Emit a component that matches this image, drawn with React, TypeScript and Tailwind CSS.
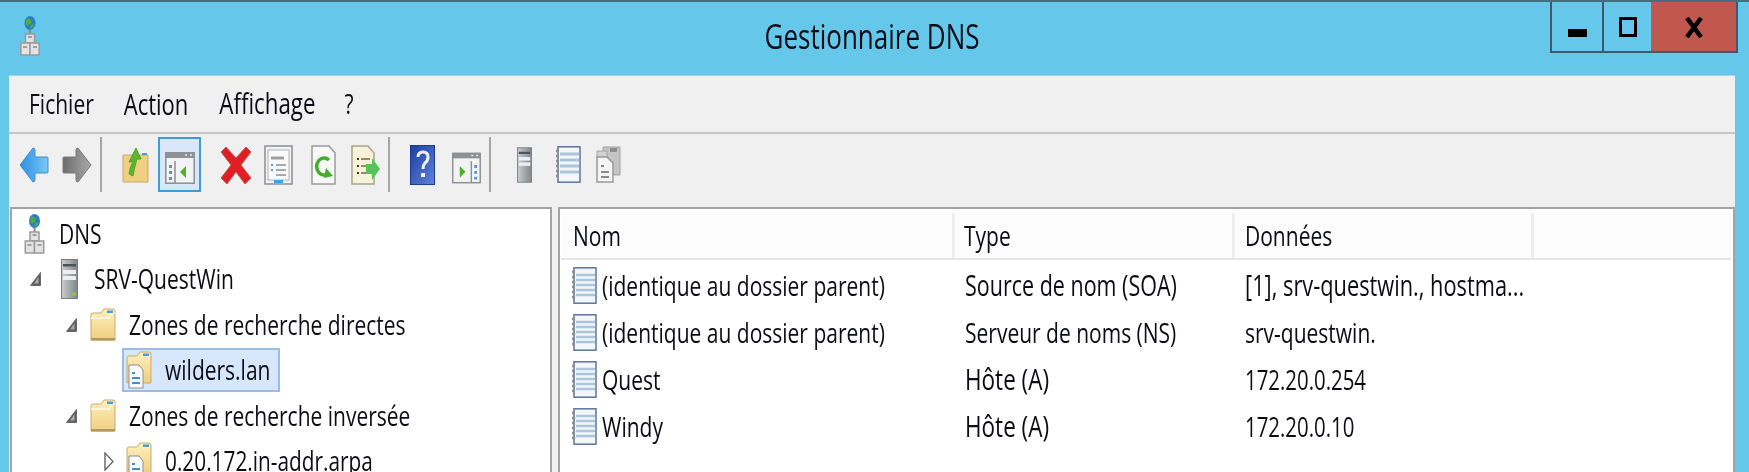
import React, { FC, ReactNode } from 'react';

type IconProps = { className?: string };

// Text in the screenshot is stretched vertically, so every label gets a scale-y
const Label: FC<{ children: ReactNode; className?: string }> = ({ children, className = '' }) => (
  <span className={`inline-block origin-center -translate-y-px scale-y-[1.32] whitespace-nowrap font-medium leading-[30px] text-[#0c0c16] [font-variant-ligatures:none] ${className}`}>
    {children}
  </span>
);

const Defs: FC = () => (
  <svg width="0" height="0" className="block">
    <defs>
      <linearGradient id="folderFill" x1="0" y1="0" x2="0" y2="1">
        <stop offset="0" stopColor="#fdf0bd" />
        <stop offset="1" stopColor="#f0cf80" />
      </linearGradient>
      <linearGradient id="metalFill" x1="0" y1="0" x2="1" y2="0">
        <stop offset="0" stopColor="#c9cdd0" />
        <stop offset="1" stopColor="#808688" />
      </linearGradient>
      <linearGradient id="backFill" x1="0" y1="0" x2="1" y2="0">
        <stop offset="0" stopColor="#2a8fe0" />
        <stop offset="1" stopColor="#7cc8f4" />
      </linearGradient>
      <linearGradient id="fwdFill" x1="0" y1="0" x2="1" y2="0">
        <stop offset="0" stopColor="#6d6d6d" />
        <stop offset="1" stopColor="#a8a8a8" />
      </linearGradient>
      <linearGradient id="helpFill" x1="0" y1="0" x2="1" y2="1">
        <stop offset="0" stopColor="#1d3fa0" />
        <stop offset="1" stopColor="#5f82dc" />
      </linearGradient>
    </defs>
  </svg>
);

const DnsIcon: FC<IconProps> = ({ className }) => (
  <svg viewBox="0 0 20 40" className={className}>
    <ellipse cx="10" cy="7" rx="5.5" ry="7" fill="#2b7fc4" />
    <path d="M6 4q3 -3 5 0q1 3 -2 5q-2 2 -3 -1zM11 9q3 -2 3 1q-2 3 -4 3z" fill="#4fae3c" />
    <rect x="9" y="14" width="2" height="4" fill="#8c8c8c" />
    <rect x="5.5" y="18" width="9" height="9" fill="#e3e3e3" stroke="#9a9a9a" strokeWidth="1.5" />
    <rect x="0.8" y="27" width="9.2" height="12" fill="#e3e3e3" stroke="#9a9a9a" strokeWidth="1.5" />
    <rect x="10" y="27" width="9.2" height="12" fill="#e3e3e3" stroke="#9a9a9a" strokeWidth="1.5" />
    <path d="M3 31h4M13 31h4M8 21h4" stroke="#8a8a8a" strokeWidth="1.5" />
  </svg>
);

const ServerIcon: FC<IconProps & { led?: string }> = ({ className, led = '#7ed23c' }) => (
  <svg viewBox="0 0 17 40" className={className}>
    <rect x="0.5" y="0.5" width="16" height="39" fill="url(#metalFill)" stroke="#7c7c7c" />
    <rect x="2" y="5" width="13" height="2.5" fill="#4c5257" />
    <rect x="2" y="11" width="13" height="4" fill="#eceeef" />
    <rect x="2" y="17" width="13" height="4" fill="#eceeef" />
    <circle cx="13" cy="35" r="2" fill={led} />
  </svg>
);

const FolderIcon: FC<IconProps> = ({ className }) => (
  <svg viewBox="0 0 26 33" className={className}>
    <path d="M1 7q0 -2 2 -2h8l3 -4h9q2 0 2 2v29H1z" fill="url(#folderFill)" stroke="#c9ab6c" />
    <path d="M1 10h18l3 -5h3" fill="none" stroke="#fffbe8" strokeWidth="1.5" />
    <rect x="17" y="2.5" width="6" height="2.5" fill="#4a9ee0" />
    <rect x="1" y="30" width="24" height="2.5" fill="#b7985c" />
  </svg>
);

const ZoneIcon: FC<IconProps> = ({ className }) => (
  <svg viewBox="0 0 26 38" className={className}>
    <path d="M1 7q0 -2 2 -2h8l3 -4h9q2 0 2 2v29H1z" fill="url(#folderFill)" stroke="#c9ab6c" />
    <rect x="17" y="2.5" width="6" height="2.5" fill="#4a9ee0" />
    <path d="M3 14h10l4 5v18H3z" fill="#fbfbfb" stroke="#8f8f8f" />
    <path d="M6 22h3M6 27h8M6 32h8" stroke="#3f8fd0" strokeWidth="2" />
  </svg>
);

const RecordIcon: FC<IconProps> = ({ className }) => (
  <svg viewBox="0 0 26 37" className={className}>
    <rect x="3" y="0.8" width="22" height="35.4" fill="#f4f7fa" stroke="#5d73a0" strokeWidth="1.5" />
    <path d="M5 8h19M5 13h19M5 18h19M5 23h19M5 28h19" stroke="#a9c6dc" strokeWidth="2.5" />
    <path d="M4 5H1M4 10H1M4 15H1M4 20H1M4 25H1M4 30H1" stroke="#8a8c90" strokeWidth="2.5" />
  </svg>
);

const BackIcon: FC<IconProps> = ({ className }) => (
  <svg viewBox="0 0 30 36" className={className}>
    <path d="M1 18 14 1q2 0 2 2v7h12q1 0 1 1v14q0 1 -1 1H16v7q0 2 -2 2z" fill="url(#backFill)" stroke="#3c8fd2" strokeLinejoin="round" />
  </svg>
);

const ForwardIcon: FC<IconProps> = ({ className }) => (
  <svg viewBox="0 0 30 36" className={className}>
    <path d="M29 18 16 1q-2 0 -2 2v7H2q-1 0 -1 1v14q0 1 1 1h12v7q0 2 2 2z" fill="url(#fwdFill)" stroke="#7a7a7a" strokeLinejoin="round" />
  </svg>
);

const FolderUpIcon: FC<IconProps> = ({ className }) => (
  <svg viewBox="0 0 27 36" className={className}>
    <path d="M1 8h25v27H1z" fill="#f0cf80" stroke="#c9ab6c" />
    <path d="M20 6h5v2h-5z" fill="#4a9ee0" />
    <path d="M7 27q1 -8 4 -12H7l7 -14 5 11h-4q-2 6 -4 17z" fill="#5bb82e" stroke="#3f9a20" strokeWidth="0.8" />
  </svg>
);

const PaneIcon: FC<IconProps & { right?: boolean }> = ({ className, right }) => (
  <svg viewBox="0 0 30 32" className={className}>
    <rect x="0.8" y="0.8" width="28.4" height="30.4" fill="#f3f3f3" stroke="#8a8f94" strokeWidth="1.5" />
    <rect x="1" y="1" width="28" height="5" fill="#8d9297" />
    <path d="M20 3h2M25 3h2" stroke="#e8e8e8" strokeWidth="1.5" />
    {right ? (
      <>
        <path d="M20 9v22" stroke="#8a8f94" strokeWidth="1.5" />
        <path d="M8 14l6 6-6 6z" fill="#4fb02c" />
        <path d="M23 13h3v3h-3zM23 19h3v3h-3zM23 25h3v3h-3z" fill="#5b95cf" />
      </>
    ) : (
      <>
        <path d="M10 9v22" stroke="#8a8f94" strokeWidth="1.5" />
        <path d="M21 14l-6 6 6 6z" fill="#4fb02c" />
        <path d="M4 13h3v3H4zM4 19h3v3H4zM4 25h3v3H4z" fill="#5b95cf" />
      </>
    )}
  </svg>
);

const DeleteIcon: FC<IconProps> = ({ className }) => (
  <svg viewBox="0 0 30 40" className={className}>
    <path d="M5 2 15 13 25 2 30 7 20 20 30 33 24 39 15 27 6 39 0 33 10 20 0 7z" fill="#e01f24" stroke="#c25a5c" strokeLinejoin="round" />
  </svg>
);

const PropertiesIcon: FC<IconProps> = ({ className }) => (
  <svg viewBox="0 0 29 40" className={className}>
    <rect x="1" y="1" width="27" height="38" fill="#f1f1f1" stroke="#8a8f94" strokeWidth="1.5" />
    <rect x="4" y="5" width="21" height="30" fill="#fafafa" stroke="#b4b4b4" />
    <path d="M7 13h13" stroke="#a0a0a0" strokeWidth="3" />
    <path d="M12 20h10M12 25h10M12 30h10" stroke="#8a8f94" strokeWidth="1.5" />
    <path d="M7 20h2M7 25h2" stroke="#4a9ee0" strokeWidth="2" />
    <rect x="10" y="35" width="9" height="3" fill="#35a5e6" />
  </svg>
);

const RefreshIcon: FC<IconProps> = ({ className }) => (
  <svg viewBox="0 0 25 40" className={className}>
    <path d="M1 1h17l6 7v31H1z" fill="#f8f8f8" stroke="#9a9a9a" strokeWidth="1.5" />
    <path d="M18 15a7.5 8.5 0 1 0 0 13" fill="none" stroke="#45ad2c" strokeWidth="3.5" />
    <path d="M15 23l7 8-9 2z" fill="#45ad2c" />
  </svg>
);

const ExportIcon: FC<IconProps> = ({ className }) => (
  <svg viewBox="0 0 30 40" className={className}>
    <path d="M1 1h16l6 7v31H1z" fill="#f8f3d8" stroke="#a8a48f" strokeWidth="1.5" />
    <path d="M6 14h2M6 21h2M6 28h2" stroke="#333" strokeWidth="2" />
    <path d="M10 14h9M10 21h5M10 28h5" stroke="#9b8a6a" strokeWidth="2" />
    <path d="M15 19h6v-6l8 11-8 11v-6h-6z" fill="#56c45a" />
  </svg>
);

const HelpIcon: FC<IconProps> = ({ className }) => (
  <svg viewBox="0 0 25 40" className={className}>
    <rect x="0.5" y="0.5" width="24" height="39" fill="url(#helpFill)" stroke="#1d3a8c" />
    <path d="M8 12q0 -5 5 -5q5 0 5 5q0 4 -3 6q-2 2 -2 6" fill="none" stroke="#f0f2fa" strokeWidth="3" />
    <rect x="11" y="28" width="4" height="4" fill="#f0f2fa" />
  </svg>
);

const NotebookIcon: FC<IconProps> = ({ className }) => (
  <svg viewBox="0 0 26 37" className={className}>
    <rect x="3" y="0.8" width="22" height="35.4" fill="#f4f7fa" stroke="#5d73a0" strokeWidth="1.5" />
    <path d="M5 8h19M5 14h19M5 20h19M5 26h19" stroke="#a9c6dc" strokeWidth="3" />
    <path d="M4 5H1M4 10H1M4 15H1M4 20H1M4 25H1M4 30H1" stroke="#8a8c90" strokeWidth="2.5" />
  </svg>
);

const CopiesIcon: FC<IconProps> = ({ className }) => (
  <svg viewBox="0 0 25 37" className={className}>
    <path d="M7 1h17v28H7z" fill="#c4c4c4" stroke="#a2a2a2" />
    <rect x="14" y="2" width="7" height="4" fill="#8e8e8e" />
    <path d="M1 5h10v6H1z" fill="#d2d2d2" stroke="#a2a2a2" />
    <path d="M1 11h10l6 6v19H1z" fill="#f5f5f5" stroke="#9a9a9a" strokeWidth="1.5" />
    <path d="M5 20h3M5 26h8M5 31h8" stroke="#8a8a8a" strokeWidth="2" />
  </svg>
);

const Separator: FC<{ className?: string }> = ({ className = '' }) => (
  <div className={`h-[55px] w-[2px] bg-[#a6a6a6] ${className}`} />
);

const Expanded: FC<IconProps> = ({ className }) => (
  <svg viewBox="0 0 11 14" className={className}>
    <path d="M10.5 0.5V13.5H0.5z" fill="#5e5e5e" stroke="#6b6b6b" />
    <path d="M8.5 5V11.5H4z" fill="#a9a9a9" />
  </svg>
);

const Collapsed: FC<IconProps> = ({ className }) => (
  <svg viewBox="0 0 10 19" className={className}>
    <path d="M1 1 9 9.5 1 18z" fill="#fff" stroke="#6e6e6e" strokeWidth="1.5" />
  </svg>
);

const TreeRow: FC<{ className: string; children: ReactNode }> = ({ className, children }) => (
  <div className={`flex h-[45.5px] items-center ${className}`}>{children}</div>
);

const records = [
  { name: '(identique au dossier parent)', type: 'Source de nom (SOA)', typeSize: 'text-[21.5px]', data: '[1], srv-questwin., hostma...', dataSize: 'text-[21.8px]' },
  { name: '(identique au dossier parent)', type: 'Serveur de noms (NS)', typeSize: 'text-[21px]', data: 'srv-questwin.', dataSize: 'text-[21px]' },
  { name: 'Quest', type: 'Hôte (A)', typeSize: 'text-[22.5px]', data: '172.20.0.254', dataSize: 'text-[20.4px]' },
  { name: 'Windy', type: 'Hôte (A)', typeSize: 'text-[22.5px]', data: '172.20.0.10', dataSize: 'text-[20.4px]' },
];

const App: FC = () => {
  return (
    <div className="flex h-[472px] w-[1749px] flex-col overflow-hidden border-t-2 border-[#4a6c7e] bg-[#65c8ea] font-['Open_Sans','Liberation_Sans',sans-serif] blur-[0.5px]">
      <Defs />

      {/* Title bar */}
      <div className="grid h-[73px] shrink-0 grid-cols-[1fr_auto_1fr]">
        <div className="pl-5 pt-[14px]">
          <DnsIcon className="h-10 w-5" />
        </div>
        <div className="pr-[5px] pt-5">
          <Label className="text-[26px]">Gestionnaire DNS</Label>
        </div>
        <div className="flex justify-end pr-[11px]">
          <div className="flex h-[51px] items-stretch border-2 border-t-0 border-[#3f5a68]">
            <div className="flex w-[52px] items-center justify-center border-r-2 border-[#3f5a68] pt-[13px]">
              <div className="h-2 w-[19px] bg-black" />
            </div>
            <div className="flex w-[47px] justify-center pt-[15px]">
              <div className="h-5 w-[18px] border-[3px] border-black" />
            </div>
            <div className="flex w-[85px] justify-center bg-[#c0584f] pt-[15px]">
              <svg viewBox="0 0 18 21" className="h-[21px] w-[18px]">
                <path d="M2 1 16 20M16 1 2 20" stroke="#000" strokeWidth="4.5" />
              </svg>
            </div>
          </div>
        </div>
      </div>

      <div className="ml-[9px] mr-[14px] flex flex-1 flex-col border-t border-[#a9cfe0] bg-[#f0f0f0]">
        {/* Menu */}
        <div className="flex h-[58px] shrink-0 items-center border-b-2 border-[#c6c6c6] pl-5">
          <Label className="text-[21px]">Fichier</Label>
          <Label className="ml-[30px] text-[22px]">Action</Label>
          <Label className="ml-[31px] text-[22.3px]">Affichage</Label>
          <Label className="ml-[29px] text-[21px]">?</Label>
        </div>

        {/* Toolbar */}
        <div className="flex h-[73px] shrink-0 items-center pb-3 pl-[10px]">
          <BackIcon className="h-9 w-[30px]" />
          <ForwardIcon className="ml-[13px] h-9 w-[30px]" />
          <Separator className="ml-2" />
          <FolderUpIcon className="ml-5 h-9 w-[27px]" />
          <div className="ml-[9px] flex h-[55px] w-[43px] items-center justify-center border-2 border-[#3c9bd8] bg-[#d8e8fa] pt-[6px]">
            <PaneIcon className="h-8 w-[30px]" />
          </div>
          <DeleteIcon className="ml-5 h-10 w-[30px]" />
          <PropertiesIcon className="ml-[13px] h-10 w-[29px]" />
          <RefreshIcon className="ml-[18px] h-10 w-[25px]" />
          <ExportIcon className="ml-[15px] h-10 w-[30px]" />
          <Separator className="ml-[7px]" />
          <HelpIcon className="ml-5 h-10 w-[25px]" />
          <PaneIcon right className="ml-[17px] mt-[6px] h-8 w-[29px]" />
          <Separator className="ml-2" />
          <ServerIcon led="#9a9a9a" className="ml-[26px] h-10 w-[15px]" />
          <NotebookIcon className="ml-[23px] h-[37px] w-[26px]" />
          <CopiesIcon className="ml-[15px] h-[37px] w-[25px]" />
        </div>

        {/* Panes */}
        <div className="flex min-h-0 flex-1 gap-[6px] pl-px">
          <div className="w-[542px] border-x-2 border-t-2 border-[#a3a3a3] bg-white pt-[2px]">
            <TreeRow className="pl-3">
              <DnsIcon className="h-10 w-[21px]" />
              <Label className="ml-[14px] text-[21px]">DNS</Label>
            </TreeRow>
            <TreeRow className="pl-[18px]">
              <Expanded className="h-[14px] w-[11px]" />
              <ServerIcon className="ml-5 h-10 w-[17px]" />
              <Label className="ml-4 text-[21px]">SRV-QuestWin</Label>
            </TreeRow>
            <TreeRow className="pl-[54px]">
              <Expanded className="h-[14px] w-[11px]" />
              <FolderIcon className="ml-[13px] h-[33px] w-[26px]" />
              <Label className="ml-[13px] text-[21px]">Zones de recherche directes</Label>
            </TreeRow>
            <TreeRow className="pl-[110px]">
              <div className="flex h-[44px] items-center border-2 border-[#9bbce6] bg-[#d6e7fb] pl-[2px] pr-[8px]">
                <ZoneIcon className="h-[38px] w-[26px]" />
                <Label className="ml-[13px] text-[21px]">wilders.lan</Label>
              </div>
            </TreeRow>
            <TreeRow className="pl-[54px]">
              <Expanded className="h-[14px] w-[11px]" />
              <FolderIcon className="ml-[13px] h-[33px] w-[26px]" />
              <Label className="ml-[13px] text-[21px]">Zones de recherche inversée</Label>
            </TreeRow>
            <TreeRow className="pl-[92px]">
              <Collapsed className="h-[19px] w-[10px]" />
              <ZoneIcon className="ml-3 h-[38px] w-[26px]" />
              <Label className="ml-[13px] text-[20.8px]">0.20.172.in-addr.arpa</Label>
            </TreeRow>
          </div>

          <div className="flex-1 border-x-2 border-t-2 border-[#a3a3a3] bg-white">
            {/* Column headers */}
            <div className="ml-px mr-[2px] mt-1 flex h-[47px] border-b-2 border-[#e6e6e6] bg-[#fcfcfc]">
              <div className="flex w-[394px] items-center border-r-[3px] border-[#ededed] pl-3">
                <Label className="text-[21px]">Nom</Label>
              </div>
              <div className="flex w-[280px] items-center border-r-[3px] border-[#ededed] pl-[9px]">
                <Label className="text-[21px]">Type</Label>
              </div>
              <div className="flex w-[299px] items-center border-r-[3px] border-[#ededed] pl-[10px]">
                <Label className="text-[21px]">Données</Label>
              </div>
            </div>
            {/* Records */}
            <div className="pt-[2px]">
              {records.map((r, i) => (
                <div key={i} className="flex h-[47.1px] items-center">
                  <div className="flex w-[405px] items-center pl-[11px]">
                    <RecordIcon className="h-[37px] w-[26px]" />
                    <Label className="ml-[5px] text-[21px]">{r.name}</Label>
                  </div>
                  <div className="w-[280px]">
                    <Label className={r.typeSize}>{r.type}</Label>
                  </div>
                  <div>
                    <Label className={r.dataSize}>{r.data}</Label>
                  </div>
                </div>
              ))}
            </div>
          </div>
        </div>
      </div>
    </div>
  );
};

export default App;
